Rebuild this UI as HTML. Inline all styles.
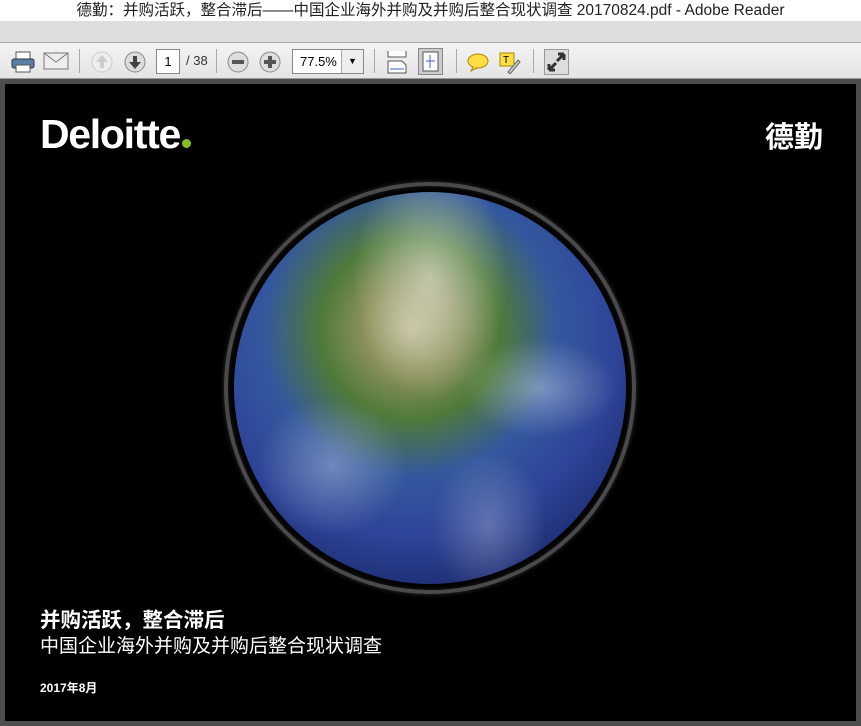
<!DOCTYPE html>
<html><head><meta charset="utf-8"><style>
*{margin:0;padding:0;box-sizing:border-box}
body{width:861px;height:726px;overflow:hidden;background:#4d4d4d;font-family:"Liberation Sans","Noto Sans CJK SC",sans-serif;position:relative}
.t{position:absolute;left:0;top:0;width:861px;height:21px;background:#fff;text-align:center;font-size:15.5px;line-height:21px;color:#222}
.g{position:absolute;left:0;top:21px;width:861px;height:21px;background:#dedede}
.tb{position:absolute;left:0;top:42px;width:861px;height:37px;background:linear-gradient(#f4f4f4,#e4e4e4);border-top:1px solid #aaa;border-bottom:1px solid #999}
.i{position:absolute}
.sep{position:absolute;top:6px;width:1px;height:24px;background:#aaa}
.page{position:absolute;left:5px;top:84px;width:851px;height:637px;background:#000;overflow:hidden}
.w{color:#fff;position:absolute}
</style></head><body>
<div class="t">德勤：并购活跃，整合滞后——中国企业海外并购及并购后整合现状调查 20170824.pdf - Adobe Reader</div>
<div class="g"></div>
<div class="tb">
<svg class="i" style="left:10px;top:7px" width="26" height="24"><rect x="6" y="2" width="14" height="8" fill="#fff" stroke="#555"/><rect x="2" y="9" width="22" height="9" rx="2" fill="#5a7ea6" stroke="#334"/><rect x="6" y="15" width="14" height="7" fill="#fff" stroke="#555"/></svg>
<svg class="i" style="left:43px;top:9px" width="26" height="18"><rect x="1" y="1" width="24" height="16" fill="#eee" stroke="#777"/><path d="M1 1l12 9 12-9" fill="none" stroke="#777"/></svg>
<div class="sep" style="left:79px"></div>
<svg class="i" style="left:90px;top:7px" width="24" height="24"><circle cx="12" cy="12" r="10" fill="#eee" stroke="#ccc"/><path d="M12 5l6 7h-4v6h-4v-6H6z" fill="#ccc"/></svg>
<svg class="i" style="left:123px;top:7px" width="24" height="24"><circle cx="12" cy="12" r="10" fill="#ddd" stroke="#888"/><path d="M12 19l6-7h-4V6h-4v6H6z" fill="#444"/></svg>
<div class="i" style="left:156px;top:6px;width:24px;height:25px;background:#fff;border:1px solid #888;font-size:13px;text-align:center;line-height:23px">1</div>
<div class="i" style="left:186px;top:10px;font-size:13px;color:#333">/ 38</div>
<div class="sep" style="left:216px"></div>
<svg class="i" style="left:226px;top:7px" width="24" height="24"><circle cx="12" cy="12" r="10" fill="#ddd" stroke="#888"/><rect x="6" y="10" width="12" height="4" fill="#555"/></svg>
<svg class="i" style="left:258px;top:7px" width="24" height="24"><circle cx="12" cy="12" r="10" fill="#ddd" stroke="#888"/><path d="M10 6h4v4h4v4h-4v4h-4v-4H6v-4h4z" fill="#555"/></svg>
<div class="i" style="left:292px;top:6px;width:72px;height:25px;background:#fff;border:1px solid #888;font-size:13px;line-height:23px;padding-left:7px">77.5%<span style="position:absolute;left:48px;top:0;width:22px;height:23px;border-left:1px solid #aaa;background:#eee;text-align:center;font-size:9px">▼</span></div>
<div class="sep" style="left:374px"></div>
<svg class="i" style="left:386px;top:6px" width="22" height="26"><path d="M2 2v6h18V2M2 12h14l4 4v8H2z" fill="#fff" stroke="#555"/><path d="M4 20h14" stroke="#36c"/></svg>
<div class="i" style="left:418px;top:5px;width:25px;height:27px;background:#ccc;border:1px solid #888"><svg width="23" height="25"><rect x="4" y="3" width="15" height="19" fill="#fff" stroke="#555"/><path d="M11 6v13M7 12h9" stroke="#36c"/></svg></div>
<div class="sep" style="left:456px"></div>
<svg class="i" style="left:466px;top:8px" width="24" height="22"><ellipse cx="12" cy="10" rx="10" ry="7" fill="#fd4" stroke="#a80"/><path d="M7 16l-2 4 6-3" fill="#fd4" stroke="#a80"/></svg>
<svg class="i" style="left:498px;top:7px" width="24" height="24"><rect x="2" y="3" width="14" height="13" fill="#fd4" stroke="#a80"/><text x="5" y="13" font-size="10" font-family="Liberation Sans">T</text><path d="M10 22l10-12 2 2-10 12z" fill="#ccc" stroke="#666"/></svg>
<div class="sep" style="left:533px"></div>
<div class="i" style="left:544px;top:6px;width:25px;height:26px;background:#ddd;border:1px solid #999"><svg width="23" height="24"><path d="M4 20l7-7M19 4l-7 7M4 20v-6M4 20h6M19 4v6M19 4h-6" stroke="#333" stroke-width="3" fill="none"/></svg></div>
</div>
<div class="page">
<div class="w" style="left:35px;top:27px;font-size:41px;font-weight:bold;letter-spacing:-1.3px">Deloitte<span style="display:inline-block;width:9px;height:9px;border-radius:50%;background:#86bc25;margin-left:2px"></span></div>
<div class="w" style="left:760px;top:30px;font-size:29px;font-weight:bold">德勤</div>
<div style="position:absolute;left:219px;top:98px;width:412px;height:412px;border-radius:50%;border:4px solid #4a4a4a;box-shadow:0 0 5px #333,inset 0 0 5px #222"></div>
<div style="position:absolute;left:229px;top:108px;width:392px;height:392px;border-radius:50%;background:radial-gradient(circle at 45% 35%,#b8b48a 0%,#8a9058 14%,#4f7a3a 27%,#33589e 44%,#2e4498 62%,#1c2a6e 82%,#0d1438 100%)"></div>
<div style="position:absolute;left:229px;top:108px;width:392px;height:392px;border-radius:50%;background:radial-gradient(ellipse at 50% 22%,rgba(255,255,255,.5),transparent 28%),radial-gradient(ellipse at 78% 50%,rgba(255,255,255,.35),transparent 18%),radial-gradient(ellipse at 25% 70%,rgba(255,255,255,.3),transparent 18%),radial-gradient(ellipse at 65% 85%,rgba(255,255,255,.25),transparent 16%),radial-gradient(circle at 50% 50%,transparent 80%,rgba(150,150,190,.45) 99%)"></div>
<div class="w" style="left:35px;top:519px;font-size:20.5px;font-weight:bold">并购活跃，整合滞后</div>
<div class="w" style="left:35px;top:547px;font-size:19px">中国企业海外并购及并购后整合现状调查</div>
<div class="w" style="left:35px;top:595px;font-size:12px;font-weight:bold">2017年8月</div>
</div>
</body></html>
